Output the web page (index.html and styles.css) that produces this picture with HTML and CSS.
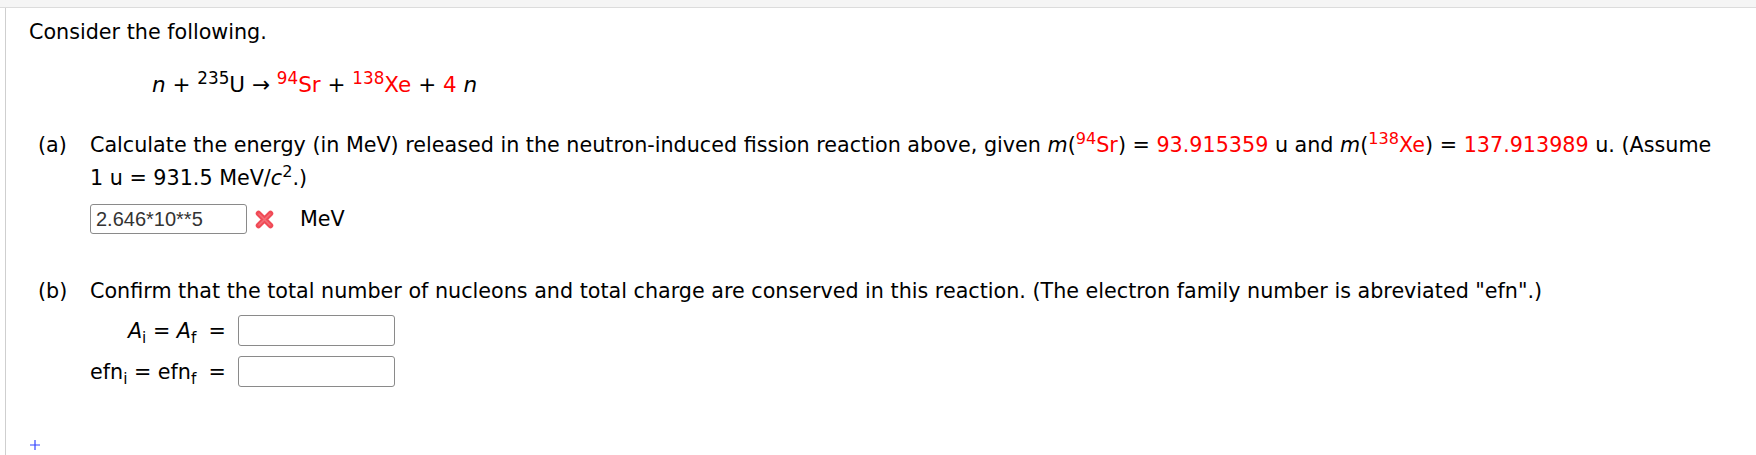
FILE: index.html
```html
<!DOCTYPE html>
<html lang="en">
<head>
<meta charset="utf-8">
<title>Fission question</title>
<link rel="stylesheet" href="styles.css">
</head>
<body>
<div class="topbar"></div>
<div class="page">
  <p class="intro">Consider the following.</p>
  <p class="eq"><i>n</i> + <sup>235</sup>U <span class="arrow">→</span> <span class="red"><sup>94</sup>Sr</span> + <span class="red"><sup>138</sup>Xe</span> + <span class="red">4</span> <i>n</i></p>

  <div class="part part-a">
    <div class="label">(a)</div>
    <div class="body">
      <p class="q">Calculate the energy (in MeV) released in the neutron-induced fission reaction above, given <i>m</i>(<span class="red"><sup>94</sup>Sr</span>) = <span class="red">93.915359</span> u and <i>m</i>(<span class="red"><sup>138</sup>Xe</span>) = <span class="red">137.913989</span> u. (Assume 1 u = 931.5 MeV/<i>c</i><sup>2</sup>.)</p>
      <div class="answer">
        <input class="box filled" type="text" value="2.646*10**5" readonly>
        <svg class="xmark" width="21" height="21" viewBox="0 0 21 21" aria-hidden="true">
          <path d="M4.5 4.5 L16.5 16.5 M16.5 4.5 L4.5 16.5" stroke="#f04a56" stroke-width="5.5" stroke-linecap="round"/>
          <path d="M5 5 L16 16 M16 5 L5 16" stroke="#f7868d" stroke-width="1.6" stroke-linecap="round" opacity="0.6"/>
        </svg>
        <span class="unit">MeV</span>
      </div>
    </div>
  </div>

  <div class="part part-b">
    <div class="label">(b)</div>
    <div class="body">
      <p class="q">Confirm that the total number of nucleons and total charge are conserved in this reaction. (The electron family number is abreviated "efn".)</p>
      <div class="grid">
        <span class="lhs"><i>A</i><sub>i</sub> = <i>A</i><sub>f</sub></span>
        <span class="eqs">=</span>
        <input class="box" type="text">
        <span class="lhs">efn<sub>i</sub> = efn<sub>f</sub></span>
        <span class="eqs">=</span>
        <input class="box" type="text">
      </div>
    </div>
  </div>

  <div class="cross">
    <svg width="10" height="10" viewBox="0 0 10 10" aria-hidden="true">
      <path d="M5 0 V10 M0 5 H10" stroke="#3344ff" stroke-width="1.2"/>
    </svg>
  </div>
</div>
</body>
</html>
```

FILE: styles.css
```css
html, body {
  margin: 0;
  background: #fff;
}

body {
  font-family: "DejaVu Sans", Verdana, sans-serif;
  font-size: 20.7px;
  color: #000;
}

.topbar {
  height: 7px;
  background: #f5f5f5;
  border-bottom: 1px solid #dcdcdc;
}

.page {
  margin-left: 5px;
  border-left: 1px solid #cfcfcf;
  padding-left: 23px;
  height: 447px;
  box-sizing: border-box;
  overflow: hidden;
}

p {
  margin: 0;
}

sup {
  font-size: 0.78em;
  line-height: 0;
  vertical-align: 0.5em;
}

sub {
  font-size: 0.74em;
  line-height: 0;
  vertical-align: -0.3em;
}

.red {
  color: #ff0000;
}

.intro {
  padding-top: 12px;
  line-height: 24px;
}

.eq {
  margin-top: 29px;
  margin-left: 123px;
  font-size: 21.5px;
  line-height: 24px;
}

.part {
  display: flex;
  padding-left: 9px;
}

.label {
  flex: 0 0 52px;
  line-height: 33px;
}

.body {
  flex: 1;
}

.q {
  line-height: 33px;
  max-width: 1635px;
}

.part-a {
  margin-top: 32px;
}

.answer {
  margin-top: 9px;
  display: flex;
  align-items: center;
}

.box {
  box-sizing: border-box;
  width: 157px;
  height: 31px;
  margin: 0;
  border: 1px solid #8a8a8a;
  border-radius: 3px;
  background: #fff;
  padding: 0 5px;
  font-family: "Liberation Sans", Arial, sans-serif;
  font-size: 20px;
  color: #333;
  outline: none;
}

.filled {
  height: 30px;
}

.xmark {
  margin-left: 7px;
  display: block;
}

.unit {
  margin-left: 25px;
}

.part-b {
  margin-top: 41px;
}

.grid {
  margin-top: 7px;
  display: grid;
  grid-template-columns: auto auto 157px;
  justify-content: start;
  align-items: center;
  column-gap: 12px;
  row-gap: 10px;
}

.lhs {
  justify-self: end;
  line-height: 24px;
}

.cross {
  margin-top: 53px;
  margin-left: 1px;
  line-height: 0;
}
```
